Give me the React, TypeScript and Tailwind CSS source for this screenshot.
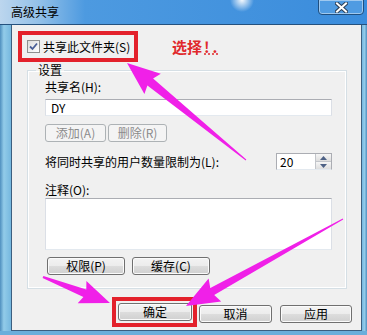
import React from 'react';

type Pt = [number, number];

const arrowPoints = (tail: Pt, tip: Pt, headLen: number, headW: number, shaftW: number, tailW: number) => {
  const dx = tip[0] - tail[0];
  const dy = tip[1] - tail[1];
  const len = Math.hypot(dx, dy);
  const ux = dx / len;
  const uy = dy / len;
  const nx = -uy;
  const ny = ux;
  const bx = tip[0] - ux * headLen;
  const by = tip[1] - uy * headLen;
  const p = (x: number, y: number, w: number) => `${(x + nx * w).toFixed(1)},${(y + ny * w).toFixed(1)}`;
  return [
    p(tail[0], tail[1], tailW / 2),
    p(bx, by, shaftW / 2),
    p(bx - ux * 3, by - uy * 3, headW / 2),
    `${tip[0]},${tip[1]}`,
    p(bx - ux * 3, by - uy * 3, -headW / 2),
    p(bx, by, -shaftW / 2),
    p(tail[0], tail[1], -tailW / 2),
  ].join(' ');
};

const font = "font-['Noto_Sans_CJK_SC','Noto_Sans',sans-serif]";

const WinButton = ({ label, width, disabled }: { label: string; width: string; disabled?: boolean }) => (
  <button
    className={`${width} h-[18px] rounded-[3px] border text-[12px] leading-none ${
      disabled
        ? 'border-[#adb2b5] bg-[#f4f4f4] text-[#8b8b8b]'
        : 'border-[#707070] bg-[linear-gradient(#f3f3f3_0%,#ececec_50%,#dddddd_50%,#d0d0d0_100%)] text-black shadow-[inset_0_0_0_1px_#fbfbfb]'
    }`}
  >
    {label}
  </button>
);

export default function App() {
  return (
    <div className={`relative flex h-[335px] w-[367px] flex-col overflow-hidden bg-[#6aaedb] ${font}`}>
      {/* title bar */}
      <div className="flex h-[25px] shrink-0 items-start justify-between border-b border-[#24517e] bg-[radial-gradient(circle_at_242px_0px,rgba(255,255,255,0.95)_0px,rgba(255,255,255,0)_12px),linear-gradient(90deg,#bcd6ee_0px,#92c0e8_40px,#4d9ae0_85px,#3a8cdc_100%)]">
        <span className="pl-[11px] pt-[4px] text-[12px] leading-[16px] text-black">高级共享</span>
        <div className="mr-[3px] flex h-[16px] w-[46px] -translate-y-[1px] items-center justify-center rounded-b-[4px] border border-[#1f4f80] bg-[#4f9be2] shadow-[inset_0_0_0_1px_rgba(255,255,255,0.45)]">
          <svg width="13" height="11" viewBox="0 0 13 11">
            <path d="M2 1.5 L11 9.5 M11 1.5 L2 9.5" stroke="#2b3f57" strokeWidth="4" strokeLinecap="square" />
            <path d="M2 1.5 L11 9.5 M11 1.5 L2 9.5" stroke="#ffffff" strokeWidth="2" strokeLinecap="square" />
          </svg>
        </div>
      </div>

      <div className="flex flex-1">
        <div className="w-[11px] bg-[linear-gradient(90deg,#4f8fbf,#92cbe9_35%,#75b7df)]" />
        {/* client area */}
        <div className="flex flex-1 flex-col border-x border-b border-[#3b5f80] bg-[#f0f0f0] pl-[6px] pt-[6px]">
          <div className="flex items-center">
            <div className="flex h-[31px] w-[120px] items-center border-4 border-[#e3212b] pl-[5px]">
              <div className="flex h-[13px] w-[13px] items-center justify-center border border-[#8e8f8f] bg-[linear-gradient(135deg,#dcdcdc,#ffffff)]">
                <svg width="9" height="9" viewBox="0 0 9 9">
                  <path d="M1 4.5 L3.5 7 L8 1.5" fill="none" stroke="#4a5f97" strokeWidth="1.8" />
                </svg>
              </div>
              <span className="ml-[3px] whitespace-nowrap text-[12px] leading-[16px] text-black">共享此文件夹(S)</span>
            </div>
            <span className="ml-[34px] text-[15px] font-bold leading-[18px] text-[#e0292c]">
              选择<span className="ml-[2px] tracking-[3px] underline decoration-dotted">!.</span>
            </span>
          </div>

          <fieldset className="ml-[9px] w-[320px] border border-[#d5dfe5] p-0 shadow-[inset_0_0_0_1px_#ffffff]">
            <legend className="ml-[8px] px-[2px] text-[12px] leading-[16px] text-black">设置</legend>
            <div className="flex flex-col pb-[13px] pl-[17px] pr-[14px] pt-[1px] text-[12px] text-black">
              <span className="leading-[16px]">共享名(H):</span>
              <input
                readOnly
                defaultValue="DY"
                className="mt-[4px] h-[17px] w-full border border-[#abadb3] border-x-[#dbdfe6] border-b-[#e3e9ef] bg-white pl-[5px] text-[12px] leading-none outline-none"
              />
              <div className="mt-[8px] flex gap-[2px]">
                <WinButton label="添加(A)" width="w-[61px]" disabled />
                <WinButton label="删除(R)" width="w-[59px]" disabled />
              </div>
              <div className="mt-[11px] flex items-center justify-between">
                <span className="leading-[16px]">将同时共享的用户数量限制为(L):</span>
                <div className="flex h-[17px] w-[56px] border border-[#abadb3] border-b-[#e3e9ef] bg-white">
                  <span className="flex-1 pl-[3px] text-[12px] leading-[15px]">20</span>
                  <div className="flex w-[16px] flex-col border-l border-[#c3c6cb]">
                    <div className="flex flex-1 items-center justify-center border-b border-[#c3c6cb] bg-[linear-gradient(#f6f6f6,#dedede)]">
                      <svg width="7" height="4" viewBox="0 0 7 4"><path d="M0 4 L3.5 0 L7 4 Z" fill="#4d6185" /></svg>
                    </div>
                    <div className="flex flex-1 items-center justify-center bg-[linear-gradient(#f6f6f6,#dedede)]">
                      <svg width="7" height="4" viewBox="0 0 7 4"><path d="M0 0 L3.5 4 L7 0 Z" fill="#4d6185" /></svg>
                    </div>
                  </div>
                </div>
              </div>
              <span className="mt-[12px] leading-[16px]">注释(O):</span>
              <div className="h-[52px] w-full border border-[#abadb3] border-x-[#dbdfe6] border-b-[#e3e9ef] bg-white" />
              <div className="mt-[7px] flex gap-[7px] pl-[2px]">
                <WinButton label="权限(P)" width="w-[78px]" />
                <WinButton label="缓存(C)" width="w-[78px]" />
              </div>
            </div>
          </fieldset>

          <div className="ml-[94px] mt-[8px] flex items-center">
            <div className="flex h-[30px] w-[85px] items-center border-4 border-[#e3212b] pl-[2px]">
              <WinButton label="确定" width="w-[74px]" />
            </div>
            <div className="ml-[2px]">
              <WinButton label="取消" width="w-[73px]" />
            </div>
            <div className="ml-[8px]">
              <WinButton label="应用" width="w-[72px]" />
            </div>
          </div>
        </div>
        <div className="w-[5px] bg-[linear-gradient(90deg,#75b7df,#92cbe9_50%,#4f8fbf)]" />
      </div>
      <div className="h-[4px] shrink-0 bg-[#6aaedb]" />

      {/* annotation arrows */}
      <svg className="pointer-events-none absolute left-0 top-0" width="367" height="335">
        <polygon points={arrowPoints([246, 160], [127, 63], 30, 26, 9, 1)} fill="#f020e8" />
        <polygon points={arrowPoints([343, 219], [186, 306], 30, 26, 8, 1)} fill="#f020e8" />
        <polygon points={arrowPoints([43, 277], [110, 303], 27, 24, 8, 2)} fill="#f020e8" />
      </svg>
    </div>
  );
}
